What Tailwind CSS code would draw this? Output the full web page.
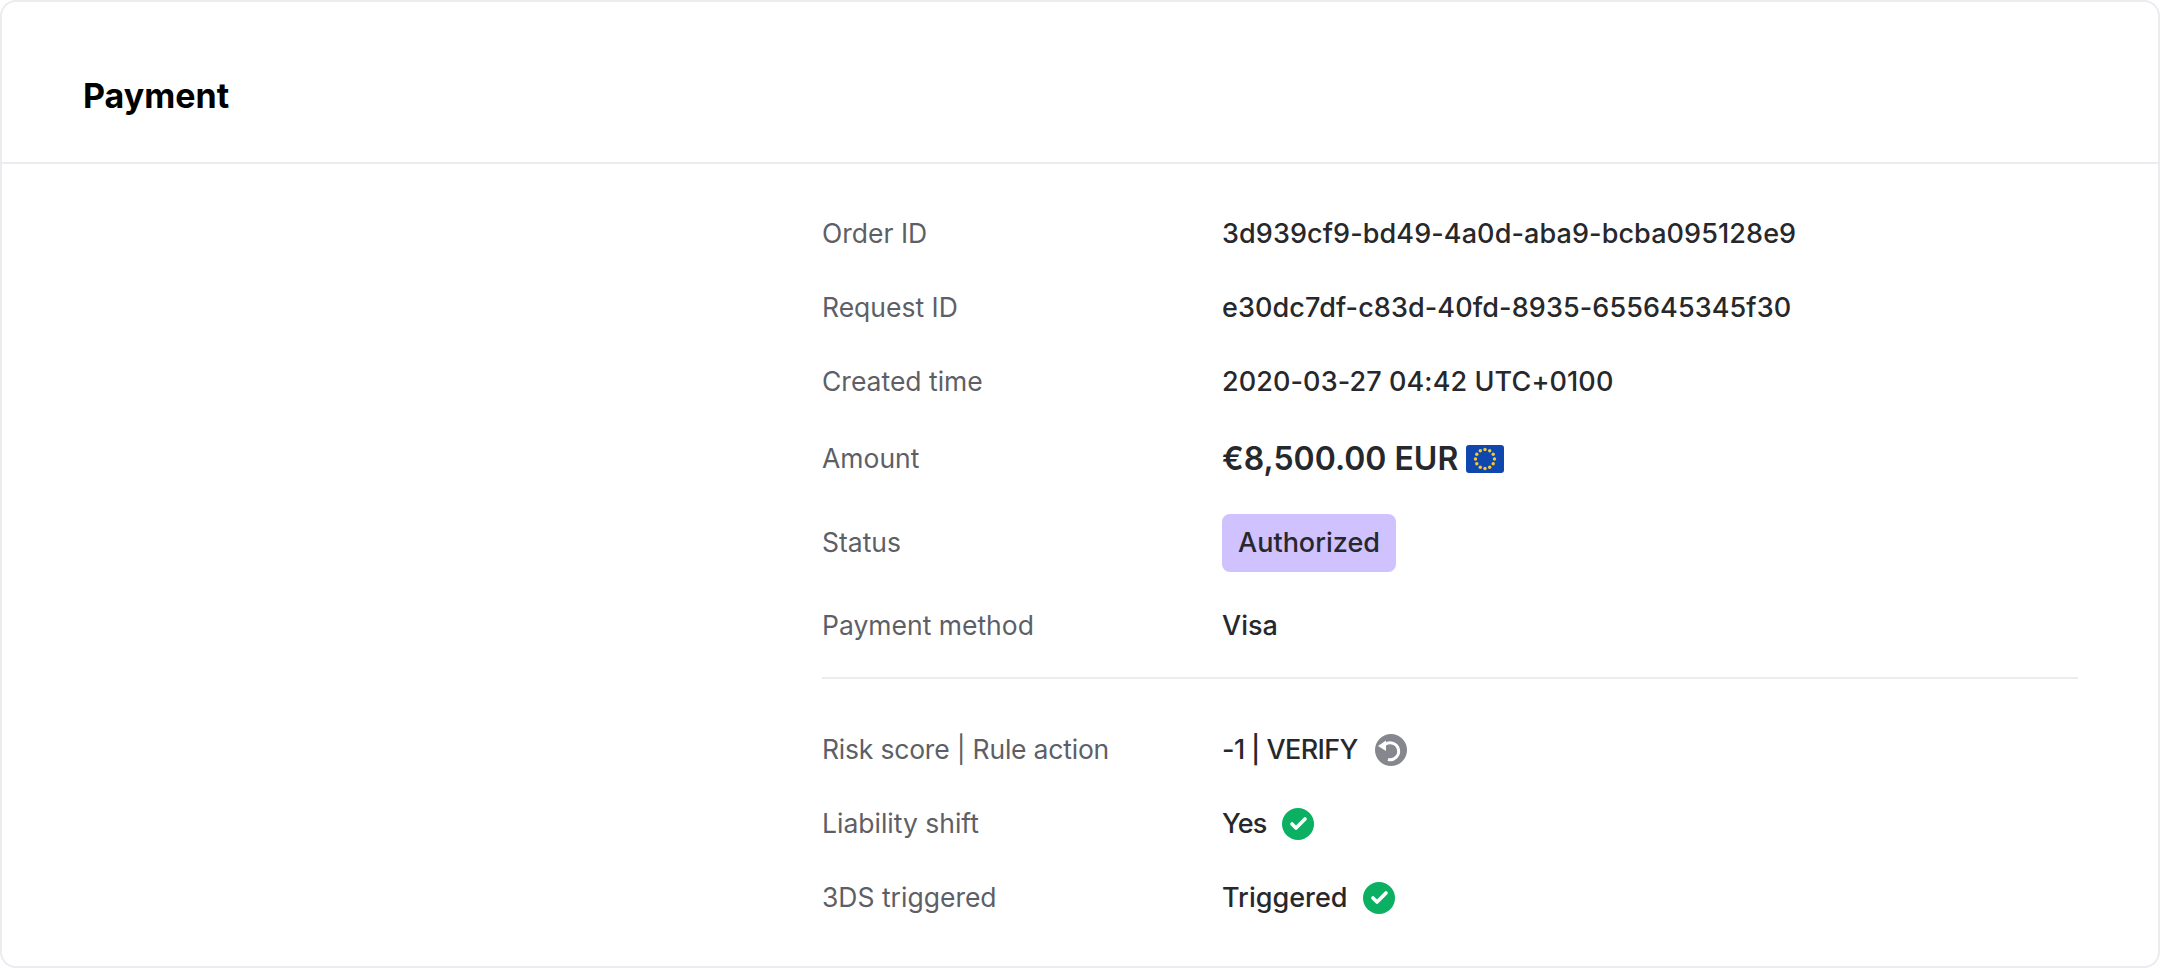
<!DOCTYPE html>
<html lang="en">
  <head>
    <meta charset="UTF-8" />
    <title>Payment</title>
    <script src="https://cdn.jsdelivr.net/npm/@tailwindcss/browser@4"></script>
  </head>
  <body class="bg-white font-['Inter',sans-serif] text-[#27282b]">
    <div class="h-[968px] w-[2160px] rounded-[16px] border-2 border-[#ebebf0] bg-white">
      <!-- Header -->
      <div class="flex h-[162px] items-center border-b-2 border-[#ebebf0] pl-[81px] pt-[27px]">
        <h1 class="text-[34px] font-bold text-black">Payment</h1>
      </div>

      <div class="pl-[820px] pr-[80px] pt-[46px]">
        <!-- Main details -->
        <dl class="text-[27px]">
          <div class="flex h-[48px] items-center">
            <dt class="w-[400px] text-[26.5px] text-[#5e5f66]">Order ID</dt>
            <dd class="font-medium tracking-[0.1px]">3d939cf9-bd49-4a0d-aba9-bcba095128e9</dd>
          </div>
          <div class="mt-[26px] flex h-[48px] items-center">
            <dt class="w-[400px] text-[26.5px] text-[#5e5f66]">Request ID</dt>
            <dd class="font-medium tracking-[0.1px]">e30dc7df-c83d-40fd-8935-655645345f30</dd>
          </div>
          <div class="mt-[26px] flex h-[48px] items-center">
            <dt class="w-[400px] text-[26.5px] text-[#5e5f66]">Created time</dt>
            <dd class="font-medium tracking-[0.1px]">2020-03-27 04:42 UTC+0100</dd>
          </div>
          <div class="mt-[27px] flex h-[52px] items-center">
            <dt class="w-[400px] text-[26.5px] text-[#5e5f66]">Amount</dt>
            <dd class="flex items-center gap-[8px] text-[32px] font-semibold">
              €8,500.00 EUR
              <svg width="38" height="28" viewBox="0 0 38 28">
                <rect width="38" height="28" rx="3" fill="#0f47af" />
                <g fill="#f5c92e">
                  <circle cx="19" cy="4.5" r="1.7" />
                  <circle cx="23.7" cy="5.8" r="1.7" />
                  <circle cx="27.2" cy="9.3" r="1.7" />
                  <circle cx="28.5" cy="14" r="1.7" />
                  <circle cx="27.2" cy="18.7" r="1.7" />
                  <circle cx="23.7" cy="22.2" r="1.7" />
                  <circle cx="19" cy="23.5" r="1.7" />
                  <circle cx="14.3" cy="22.2" r="1.7" />
                  <circle cx="10.8" cy="18.7" r="1.7" />
                  <circle cx="9.5" cy="14" r="1.7" />
                  <circle cx="10.8" cy="9.3" r="1.7" />
                  <circle cx="14.3" cy="5.8" r="1.7" />
                </g>
              </svg>
            </dd>
          </div>
          <div class="mt-[29px] flex h-[58px] items-center">
            <dt class="w-[400px] text-[26.5px] text-[#5e5f66]">Status</dt>
            <dd class="flex h-[58px] w-[174px] items-center justify-center rounded-[8px] bg-[#d0c1ff] font-medium">Authorized</dd>
          </div>
          <div class="mt-[30px] flex h-[48px] items-center">
            <dt class="w-[400px] text-[26.5px] text-[#5e5f66]">Payment method</dt>
            <dd class="font-medium">Visa</dd>
          </div>
        </dl>

        <div class="mt-[27px] border-t-2 border-[#ebebf0]"></div>

        <!-- Risk details -->
        <dl class="mt-[47px] text-[27px]">
          <div class="flex h-[48px] items-center">
            <dt class="w-[400px] text-[26.5px] tracking-[-0.2px] text-[#5e5f66]">Risk score | Rule action</dt>
            <dd class="flex items-center gap-[17px] font-medium tracking-[-0.6px]">
              -1 | VERIFY
              <svg width="32" height="32" viewBox="0 0 32 32">
                <circle cx="16" cy="16" r="16" fill="#86868e" />
                <path d="M10 10.5a8.5 8.5 0 1 1 3 15" fill="none" stroke="#fff" stroke-width="3" />
                <path d="M11 6.5v10.5l-8-5z" fill="#fff" />
              </svg>
            </dd>
          </div>
          <div class="mt-[26px] flex h-[48px] items-center">
            <dt class="w-[400px] text-[26.5px] text-[#5e5f66]">Liability shift</dt>
            <dd class="flex items-center gap-[16px] font-medium tracking-[-0.8px]">
              Yes
              <svg width="32" height="32" viewBox="0 0 32 32">
                <circle cx="16" cy="16" r="16" fill="#0bb062" />
                <path d="M10 16l4 4 9-9" fill="none" stroke="#fff" stroke-width="3.6" stroke-linecap="round" stroke-linejoin="round" />
              </svg>
            </dd>
          </div>
          <div class="mt-[26px] flex h-[48px] items-center">
            <dt class="w-[400px] text-[26.5px] text-[#5e5f66]">3DS triggered</dt>
            <dd class="flex items-center gap-[16px] font-medium">
              Triggered
              <svg width="32" height="32" viewBox="0 0 32 32">
                <circle cx="16" cy="16" r="16" fill="#0bb062" />
                <path d="M10 16l4 4 9-9" fill="none" stroke="#fff" stroke-width="3.6" stroke-linecap="round" stroke-linejoin="round" />
              </svg>
            </dd>
          </div>
        </dl>
      </div>
    </div>
  </body>
</html>
